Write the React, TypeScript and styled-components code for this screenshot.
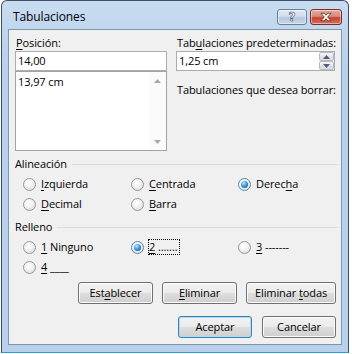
import React from "react";
import styled, { createGlobalStyle } from "styled-components";

const GlobalStyle = createGlobalStyle`
  html, body {
    margin: 0;
    padding: 0;
    background: #ffffff;
  }
  body {
    font-family: "Segoe UI", "Open Sans", sans-serif;
    font-size: 11px;
    letter-spacing: -0.1px;
    color: #000000;
  }
  u {
    text-decoration-thickness: 1px;
    text-underline-offset: 2px;
  }
`;

// window frame
const Window = styled.div`
  margin-left: 1px;
  width: 348px;
  height: 353px;
  box-sizing: border-box;
  border: 1px solid #3f4e60;
  border-bottom-color: #2a9bd3;
  border-radius: 6px 6px 0 0;
  background: linear-gradient(#c8dcf1, #b9d1ea 60px);
  padding: 0 6px 7px;
  display: flex;
  flex-direction: column;
`;

const TitleBar = styled.div`
  height: 28px;
  display: flex;
  align-items: flex-start;
`;

const Title = styled.span`
  margin: 8px 0 0 5px;
  font-size: 12px;
  line-height: 16px;
`;

const CaptionButtons = styled.div`
  margin: 8px 0 0 auto;
  display: flex;
  gap: 3px;
`;

const CaptionButton = styled.div<{ $close?: boolean }>`
  width: ${(p) => (p.$close ? 32 : 30)}px;
  height: 16px;
  box-sizing: border-box;
  border: 1px solid ${(p) => (p.$close ? "#7a2d22" : "#6a7e99")};
  border-radius: 3px;
  background: ${(p) =>
    p.$close
      ? "linear-gradient(#e7a99d, #d98a7b 45%, #c4442f 55%, #d2725f)"
      : "linear-gradient(#e3ebf5, #cfdcea 45%, #b7c9dd 55%, #c6d6e8)"};
  box-shadow: inset 0 0 0 1px rgba(255, 255, 255, 0.45);
  display: flex;
  align-items: center;
  justify-content: center;
`;

const HelpGlyph = styled.span`
  font-family: "DejaVu Sans", sans-serif;
  font-weight: bold;
  font-size: 12px;
  line-height: 12px;
  color: #ffffff;
  -webkit-text-stroke: 0.6px #40536e;
`;

// client area
const Client = styled.div`
  flex: 1;
  border: 1px solid #7f94ad;
  background: #f0f0f0;
  padding: 5px 5px 6px 6px;
  display: flex;
  flex-direction: column;
`;

const TopSection = styled.div`
  display: grid;
  grid-template-columns: 152px 159px;
  column-gap: 9px;
`;

const Column = styled.div`
  display: flex;
  flex-direction: column;
`;

const FieldLabel = styled.div<{ $gap?: number }>`
  height: 16px;
  line-height: 16px;
  white-space: nowrap;
  margin-top: ${(p) => p.$gap ?? 0}px;
  padding-left: 1px;
`;

const TextBox = styled.div`
  height: 20px;
  box-sizing: border-box;
  border: 1px solid #abadb3;
  background: #ffffff;
  display: flex;
`;

const BoxText = styled.span`
  flex: 1;
  padding-left: 2px;
  line-height: 18px;
`;

const ListBox = styled.div`
  height: 80px;
  box-sizing: border-box;
  border: 1px solid #a3a3a3;
  background: #ffffff;
  display: flex;
`;

const ListItems = styled.div`
  flex: 1;
  padding: 2px 2px;
  line-height: 15px;
`;

const ScrollBar = styled.div`
  width: 17px;
  background: #fbfbfb;
  display: flex;
  flex-direction: column;
  justify-content: space-between;
`;

const ScrollArrow = styled.div`
  height: 17px;
  display: flex;
  align-items: center;
  justify-content: center;
`;

const SpinButtons = styled.div`
  width: 15px;
  display: flex;
  flex-direction: column;
`;

const SpinButton = styled.div`
  flex: 1;
  box-sizing: border-box;
  border: 1px solid #b4b9c4;
  border-radius: 2px;
  background: linear-gradient(#f6f6f6, #e5e5e5 50%, #d8d8d8 51%, #e3e3e3);
  display: flex;
  align-items: center;
  justify-content: center;
`;

const GroupHeader = styled.div<{ $gap: number }>`
  margin-top: ${(p) => p.$gap}px;
  height: 15px;
  display: flex;
  align-items: center;
  gap: 5px;
  margin-right: -2px;
  &::after {
    content: "";
    flex: 1;
    height: 1px;
    margin-top: 2px;
    background: #d5dfe5;
  }
`;

const RadioGrid = styled.div`
  margin-top: 3px;
  padding-left: 8px;
  display: grid;
  grid-template-columns: 108px 107px 1fr;
  grid-auto-rows: 20px;
`;

const RadioOption = styled.div`
  display: flex;
  align-items: center;
  gap: 4px;
  white-space: nowrap;
`;

const RadioCircle = styled.span<{ $checked?: boolean }>`
  width: 13px;
  height: 13px;
  box-sizing: border-box;
  border-radius: 50%;
  border: 1px solid ${(p) => (p.$checked ? "#5e87a8" : "#979797")};
  background: radial-gradient(circle at 40% 35%, #ffffff, #f1f1f1 45%, #d2d2d2);
  display: flex;
  align-items: center;
  justify-content: center;
  &::after {
    content: "";
    display: ${(p) => (p.$checked ? "block" : "none")};
    width: 7px;
    height: 7px;
    border-radius: 50%;
    background: radial-gradient(circle at 38% 32%, #bfe6ff, #3c9be0 45%, #0c4d8e);
  }
`;

const RadioText = styled.span<{ $focused?: boolean }>`
  border: 1px dotted ${(p) => (p.$focused ? "#000000" : "transparent")};
  padding: 0 1px 0 0;
  line-height: 14px;
`;

const ButtonRow = styled.div<{ $gap: number; $space: number }>`
  margin-top: ${(p) => p.$gap}px;
  display: flex;
  justify-content: flex-end;
  gap: ${(p) => p.$space}px;
`;

const PushButton = styled.div<{ $width: number; $default?: boolean }>`
  width: ${(p) => p.$width}px;
  height: 22px;
  box-sizing: border-box;
  border: 1px solid ${(p) => (p.$default ? "#3c7fb1" : "#707070")};
  border-radius: 3px;
  background: linear-gradient(#f2f2f2, #ebebeb 48%, #dddddd 52%, #cfcfcf);
  box-shadow: inset 0 0 0 1px ${(p) => (p.$default ? "#a8ddf6" : "#fbfbfb")};
  display: flex;
  align-items: center;
  justify-content: center;
`;

const ButtonLabel = styled.span`
  line-height: 14px;
  white-space: nowrap;
`;

function Arrow({ up, color }: { up?: boolean; color: string }) {
  return (
    <svg width="7" height="4" viewBox="0 0 7 4">
      <path d={up ? "M0 4 L3.5 0 L7 4 Z" : "M0 0 L3.5 4 L7 0 Z"} fill={color} />
    </svg>
  );
}

function Radio({
  checked,
  focused,
  children,
}: {
  checked?: boolean;
  focused?: boolean;
  children: React.ReactNode;
}) {
  return (
    <RadioOption>
      <RadioCircle $checked={checked} />
      <RadioText $focused={focused}>{children}</RadioText>
    </RadioOption>
  );
}

function Button({
  width,
  isDefault,
  children,
}: {
  width: number;
  isDefault?: boolean;
  children: React.ReactNode;
}) {
  return (
    <PushButton $width={width} $default={isDefault}>
      <ButtonLabel>{children}</ButtonLabel>
    </PushButton>
  );
}

export default function App() {
  return (
    <>
      <GlobalStyle />
      <Window>
        <TitleBar>
          <Title>Tabulaciones</Title>
          <CaptionButtons>
            <CaptionButton>
              <HelpGlyph>?</HelpGlyph>
            </CaptionButton>
            <CaptionButton $close>
              <svg width="12" height="10" viewBox="0 0 12 10">
                <path
                  d="M1 1.5 L4 1 L6 3.3 L8 1 L11 1.5 L7.6 5 L11 8.5 L8 9 L6 6.7 L4 9 L1 8.5 L4.4 5 Z"
                  fill="#ffffff"
                  stroke="#5a231b"
                  strokeWidth="0.8"
                  strokeLinejoin="round"
                />
              </svg>
            </CaptionButton>
          </CaptionButtons>
        </TitleBar>
        <Client>
          <TopSection>
            <Column>
              <FieldLabel>
                <u>P</u>osición:
              </FieldLabel>
              <TextBox>
                <BoxText>14,00</BoxText>
              </TextBox>
              <ListBox>
                <ListItems>13,97 cm</ListItems>
                <ScrollBar>
                  <ScrollArrow>
                    <Arrow up color="#a9a9a9" />
                  </ScrollArrow>
                  <ScrollArrow>
                    <Arrow color="#a9a9a9" />
                  </ScrollArrow>
                </ScrollBar>
              </ListBox>
            </Column>
            <Column>
              <FieldLabel>
                Tab<u>u</u>laciones predeterminadas:
              </FieldLabel>
              <TextBox>
                <BoxText>1,25 cm</BoxText>
                <SpinButtons>
                  <SpinButton>
                    <Arrow up color="#4b5f82" />
                  </SpinButton>
                  <SpinButton>
                    <Arrow color="#4b5f82" />
                  </SpinButton>
                </SpinButtons>
              </TextBox>
              <FieldLabel $gap={11}>Tabulaciones que desea borrar:</FieldLabel>
            </Column>
          </TopSection>

          <GroupHeader $gap={5}>Alineación</GroupHeader>
          <RadioGrid>
            <Radio>
              <u>I</u>zquierda
            </Radio>
            <Radio>
              <u>C</u>entrada
            </Radio>
            <Radio checked>
              Derec<u>h</u>a
            </Radio>
            <Radio>
              <u>D</u>ecimal
            </Radio>
            <Radio>
              <u>B</u>arra
            </Radio>
          </RadioGrid>

          <GroupHeader $gap={5}>Relleno</GroupHeader>
          <RadioGrid>
            <Radio>
              <u>1</u> Ninguno
            </Radio>
            <Radio checked focused>
              <u>2</u> .......
            </Radio>
            <Radio>
              <u>3</u> -------
            </Radio>
            <Radio>
              <u>4</u> ____
            </Radio>
          </RadioGrid>

          <ButtonRow $gap={5} $space={9}>
            <Button width={75}>
              Est<u>a</u>blecer
            </Button>
            <Button width={75}>
              <u>E</u>liminar
            </Button>
            <Button width={90}>
              Eliminar <u>t</u>odas
            </Button>
          </ButtonRow>
          <ButtonRow $gap={12} $space={10}>
            <Button width={74} isDefault>
              Aceptar
            </Button>
            <Button width={74}>Cancelar</Button>
          </ButtonRow>
        </Client>
      </Window>
    </>
  );
}
